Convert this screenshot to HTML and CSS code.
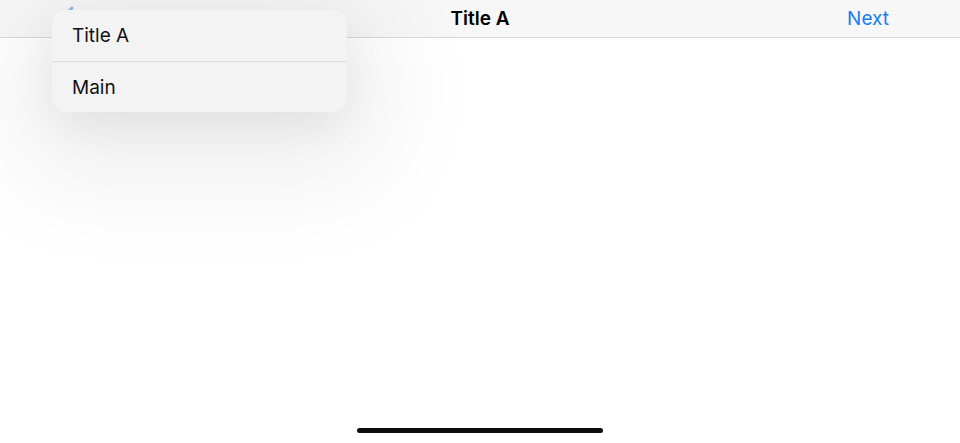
FILE: index.html
```html
<!DOCTYPE html>
<html>
<head>
<meta charset="utf-8">
<link rel="stylesheet" href="styles.css">
</head>
<body>
<div class="screen">
  <header class="navbar">
    <div class="nav-left">
      <svg class="back" width="14" height="26" viewBox="0 0 14 26"><path d="M12 2 L2 13 L12 24" fill="none" stroke="#8fb8ee" stroke-width="3" stroke-linecap="round" stroke-linejoin="round"/></svg>
    </div>
    <div class="nav-title">Title A</div>
    <div class="nav-right"><span class="next">Next</span></div>
  </header>
  <main class="content"></main>
  <div class="home-row"><div class="home-indicator"></div></div>
  <div class="menu">
    <div class="menu-item">Title A</div>
    <div class="menu-item">Main</div>
  </div>
</div>
</body>
</html>
```
FILE: styles.css
```css
html, body {
  margin: 0;
  padding: 0;
  background: #fff;
}
.screen {
  position: relative;
  width: 960px;
  height: 443px;
  display: flex;
  flex-direction: column;
  overflow: hidden;
  font-family: "Inter", "Liberation Sans", sans-serif;
}
.navbar {
  height: 37px;
  border-bottom: 1px solid #d9d9d9;
  background: #f7f7f7;
  display: grid;
  grid-template-columns: 1fr auto 1fr;
  align-items: center;
  flex: none;
}
.nav-left {
  padding-left: 60px;
  display: flex;
  align-items: center;
  height: 100%;
}
.back {
  display: block;
}
.nav-title {
  font-size: 19px;
  font-weight: 600;
  color: #000;
}
.nav-right {
  display: flex;
  justify-content: flex-end;
  padding-right: 71px;
}
.next {
  font-size: 19px;
  color: #1a7cf5;
}
.content {
  flex: 1;
}
.home-row {
  height: 24px;
  display: flex;
  justify-content: center;
  flex: none;
}
.home-indicator {
  width: 246px;
  height: 5px;
  border-radius: 3px;
  background: #0d0d0d;
  margin-top: 9px;
}
.menu {
  position: absolute;
  left: 52px;
  top: 10px;
  width: 295px;
  border-radius: 14px;
  background: #f3f3f3;
  box-shadow: 0 15px 40px rgba(0, 0, 0, 0.06), 0 30px 110px 35px rgba(0, 0, 0, 0.07);
  overflow: hidden;
}
.menu-item {
  height: 51px;
  display: flex;
  align-items: center;
  padding-left: 20px;
  font-size: 19px;
  color: #111;
}
.menu-item + .menu-item {
  border-top: 1px solid #dcdcdc;
  height: 50px;
}
```
